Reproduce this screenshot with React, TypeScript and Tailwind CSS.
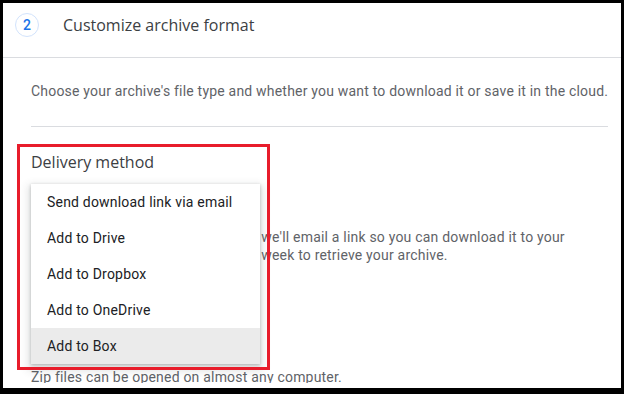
import React from 'react';

const deliveryOptions = [
  'Send download link via email',
  'Add to Drive',
  'Add to Dropbox',
  'Add to OneDrive',
  'Add to Box',
];

export default function App() {
  const highlighted = 4;

  return (
    <div className="w-[624px] h-[394px] bg-black pt-[3px] pl-[3px] pr-[3px] pb-[6px]">
      <div className="relative h-full bg-white overflow-hidden font-['Roboto',sans-serif] tracking-[0.2px]">
        {/* Step header */}
        <div className="h-[55px] flex items-center pb-[10px] pl-[12px] border-b border-[#dadce0]">
          <div className="w-[24px] h-[24px] rounded-full border border-[#d2e3fc] flex items-center justify-center text-[14px] text-[#1a73e8] font-medium">
            2
          </div>
          <h2 className="ml-[24px] font-['Open_Sans',sans-serif] tracking-normal text-[16px] text-[#3c4043] font-medium">
            Customize archive format
          </h2>
        </div>

        {/* Step body, cut off by the scroll area */}
        <div className="h-[325px] overflow-hidden pl-[28px] pr-[13px]">
          <p className="pt-[23px] text-[14px] leading-[20px] text-[#5f6368] whitespace-nowrap">
            Choose your archive's file type and whether you want to download it or save it in the cloud.
          </p>
          <div className="mt-[25px] h-px bg-[#dadce0]" />

          <h3 className="mt-[23px] font-['Open_Sans',sans-serif] tracking-normal text-[16px] leading-[24px] text-[#3c4043] font-medium">
            Delivery method
          </h3>

          <div className="mt-[54px] text-[14px] leading-[18px] text-[#5f6368] whitespace-nowrap">
            <p>When the archive has been created, we'll email a link so you can download it to your</p>
            <p>computer. After that you'll have one week to retrieve your archive.</p>
          </div>

          <p className="mt-[104px] text-[14px] leading-[18px] text-[#5f6368] whitespace-nowrap">
            Zip files can be opened on almost any computer.
          </p>
        </div>

        {/* Open dropdown */}
        <ul className="absolute left-[28px] top-[181px] w-[229px] bg-white shadow-[0_4px_8px_3px_rgba(60,64,67,0.15),0_1px_3px_rgba(60,64,67,0.3)]">
          {deliveryOptions.map((opt, i) => (
            <li
              key={opt}
              className={`h-[36px] flex items-center pl-[16px] text-[14px] text-[#202124] ${
                i === highlighted ? 'bg-[#ebebeb]' : ''
              }`}
            >
              {opt}
            </li>
          ))}
        </ul>

        {/* Annotation box */}
        <div className="absolute left-[14px] top-[141px] w-[253px] h-[226px] border-[3px] border-[#e81c2b]" />
      </div>
    </div>
  );
}
